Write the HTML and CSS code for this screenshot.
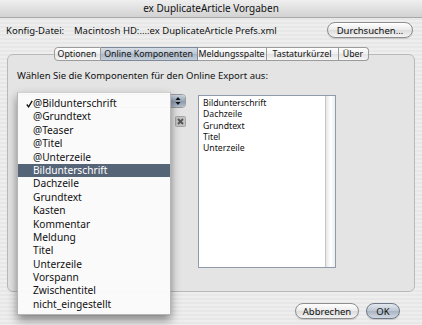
FILE: index.html
```html
<!DOCTYPE html>
<html lang="de">

<head>
  <meta charset="UTF-8" />
  <meta name="viewport" content="width=device-width, initial-scale=1.0">
  <title>ex DuplicateArticle Vorgaben</title>
  <link rel="stylesheet" href="styles.css">
</head>

<body>
  <div class="window">
    <div class="titlebar">ex DuplicateArticle Vorgaben</div>

    <div class="config">
      <span class="config-label">Konfig-Datei:</span>
      <span class="config-path">Macintosh HD:...:ex DuplicateArticle Prefs.xml</span>
      <button class="pill browse">Durchsuchen...</button>
    </div>

    <div class="tabs">
      <span class="tab">Optionen</span>
      <span class="tab active">Online Komponenten</span>
      <span class="tab">Meldungsspalte</span>
      <span class="tab">Tastaturkürzel</span>
      <span class="tab">Über</span>
    </div>

    <div class="group">
      <div class="prompt">Wählen Sie die Komponenten für den Online Export aus:</div>

      <div class="row">
        <div class="popup-area">
          <div class="popup-button">
            <span class="popup-arrows">
              <svg width="8" height="10" viewBox="0 0 8 10">
                <path d="M4 1 L6.5 4 L1.5 4 Z" fill="#111" />
                <path d="M4 9 L6.5 6 L1.5 6 Z" fill="#111" />
              </svg>
            </span>
          </div>
          <div class="tools">
            <span class="plus">+</span>
            <span class="remove">
              <svg width="11" height="11" viewBox="0 0 11 11">
                <rect x="0.5" y="0.5" width="10" height="10" rx="1" fill="#c4c4c4" stroke="#a6a6a6" />
                <path d="M3 3 L8 8 M8 3 L3 8" stroke="#555" stroke-width="1.8" />
              </svg>
            </span>
          </div>

          <!-- open popup menu -->
          <ul class="menu">
            <li class="checked">
              <svg class="check" width="7" height="8" viewBox="0 0 7 8">
                <path d="M0.8 4.5 L2.6 6.8 L6.2 0.8" fill="none" stroke="#111" stroke-width="1.3" />
              </svg>@Bildunterschrift
            </li>
            <li>@Grundtext</li>
            <li>@Teaser</li>
            <li>@Titel</li>
            <li>@Unterzeile</li>
            <li class="highlight">Bildunterschrift</li>
            <li>Dachzeile</li>
            <li>Grundtext</li>
            <li>Kasten</li>
            <li>Kommentar</li>
            <li>Meldung</li>
            <li>Titel</li>
            <li>Unterzeile</li>
            <li>Vorspann</li>
            <li>Zwischentitel</li>
            <li>nicht_eingestellt</li>
          </ul>
        </div>

        <div class="listbox">
          <ul class="list-items">
            <li>Bildunterschrift</li>
            <li>Dachzeile</li>
            <li>Grundtext</li>
            <li>Titel</li>
            <li>Unterzeile</li>
          </ul>
          <div class="scroll-track"></div>
        </div>
      </div>
    </div>

    <div class="footer">
      <button class="pill cancel">Abbrechen</button>
      <button class="pill ok">OK</button>
    </div>
  </div>
</body>

</html>
```

FILE: styles.css
```css
body {
  margin: 0;
  padding: 0;
  font-family: 'Noto Sans', 'DejaVu Sans', sans-serif;
  color: #111;
}

.window {
  width: 422px;
  height: 325px;
  overflow: hidden;
  background: repeating-linear-gradient(#eeeeee 0 2px, #e7e7e7 2px 4px);
}

.titlebar {
  height: 18px;
  line-height: 16px;
  text-align: center;
  font-size: 10px;
  background: linear-gradient(#efefef, #d2d2d2);
  border-bottom: 1px solid #a9a9a9;
  box-sizing: border-box;
}

.config {
  display: flex;
  align-items: center;
  height: 16px;
  margin-top: 4px;
  padding: 0 9px 0 6px;
  font-size: 9.5px;
}

.config-label {
  width: 68px;
}

.config-path {
  flex: 1;
}

.pill {
  font-family: inherit;
  font-size: 9.5px;
  color: #111;
  height: 16px;
  padding: 0;
  border: 1px solid #8e8e8e;
  border-radius: 8px;
  background: linear-gradient(#ffffff, #eaeaea 50%, #dcdcdc 51%, #f4f4f4);
  box-shadow: 0 1px 1px rgba(0, 0, 0, 0.15);
}

.browse {
  width: 86px;
}

.tabs {
  display: flex;
  justify-content: center;
  margin-top: 9px;
  position: relative;
  z-index: 1;
}

.tab {
  height: 14px;
  line-height: 13px;
  font-size: 8.8px;
  box-sizing: border-box;
  border: 1px solid #9b9b9b;
  border-left: none;
  background: linear-gradient(#ffffff, #efefef 50%, #e2e2e2 51%, #f6f6f6);
  text-align: center;
}

.tab:nth-child(1) {
  width: 47px;
  border-left: 1px solid #9b9b9b;
  border-radius: 4px 0 0 4px;
}

.tab:nth-child(2) {
  width: 97px;
}

.tab:nth-child(3) {
  width: 69px;
}

.tab:nth-child(4) {
  width: 72px;
}

.tab:nth-child(5) {
  width: 30px;
  border-radius: 0 4px 4px 0;
}

.tab.active {
  background: linear-gradient(#d7dde6, #bcc6d3 50%, #aab6c6 51%, #c6d0dc);
  border-color: #7d8898;
}

.group {
  height: 238px;
  margin: -7px 7px 0 7px;
  box-sizing: border-box;
  border: 1px solid #b9b9b9;
  border-radius: 6px;
  background: #e4e4e4;
  padding: 14px 0 0 9px;
}

.prompt {
  font-size: 9.5px;
  height: 14px;
  line-height: 14px;
}

.row {
  display: flex;
  margin-top: 11px;
}

.popup-area {
  position: relative;
  width: 181px;
}

.popup-button {
  width: 169px;
  height: 14px;
  box-sizing: border-box;
  border: 1px solid #9a9a9a;
  border-radius: 4px;
  background: linear-gradient(#ffffff, #eeeeee);
  display: flex;
  justify-content: flex-end;
}

.popup-arrows {
  width: 14px;
  height: 12px;
  border-radius: 0 3px 3px 0;
  background: linear-gradient(#c9d2dd, #98a6b7 50%, #8a99ac 51%, #b3c0cf);
  display: flex;
  align-items: center;
  justify-content: center;
}

.tools {
  display: flex;
  justify-content: flex-end;
  align-items: center;
  gap: 6px;
  margin-top: 8px;
  padding-right: 12px;
}

.plus {
  color: #d0d0d0;
  font-size: 11px;
  line-height: 11px;
}

.remove svg {
  display: block;
}

.menu {
  position: absolute;
  left: 0;
  top: -2px;
  width: 154px;
  margin: 0;
  padding: 4px 0 3px 0;
  list-style: none;
  background: rgba(250, 250, 250, 0.97);
  border: 1px solid #b5b5b5;
  border-top-color: #d0d0d0;
  box-sizing: border-box;
  box-shadow: 0 5px 9px rgba(0, 0, 0, 0.45);
  z-index: 2;
}

.menu li {
  position: relative;
  height: 13.4px;
  line-height: 13.4px;
  padding-left: 15px;
  font-size: 10.2px;
}

.menu li.highlight {
  background: #566478;
  color: #fff;
}

.check {
  position: absolute;
  left: 8px;
  top: 3px;
}

.listbox {
  display: flex;
  width: 138px;
  height: 173px;
  margin-top: 1px;
  box-sizing: border-box;
  border: 1px solid #8f9bab;
  background: #fff;
}

.list-items {
  flex: 1;
  margin: 0;
  padding: 2px 0 0 4px;
  list-style: none;
  font-size: 8.7px;
}

.list-items li {
  height: 11.3px;
  line-height: 11.3px;
}

.scroll-track {
  width: 9px;
  border-left: 1px solid #c6c6c6;
  background: linear-gradient(90deg, #e6e6e6, #ffffff 50%, #eeeeee);
}

.footer {
  display: flex;
  justify-content: flex-end;
  gap: 7px;
  margin-top: 11px;
  padding-right: 22px;
}

.cancel {
  width: 64px;
}

.ok {
  width: 34px;
  background: linear-gradient(#e4e9ef, #bcc5d0 50%, #a9b4c2 51%, #d0d8e2);
  border-color: #6f7a88;
}
```
